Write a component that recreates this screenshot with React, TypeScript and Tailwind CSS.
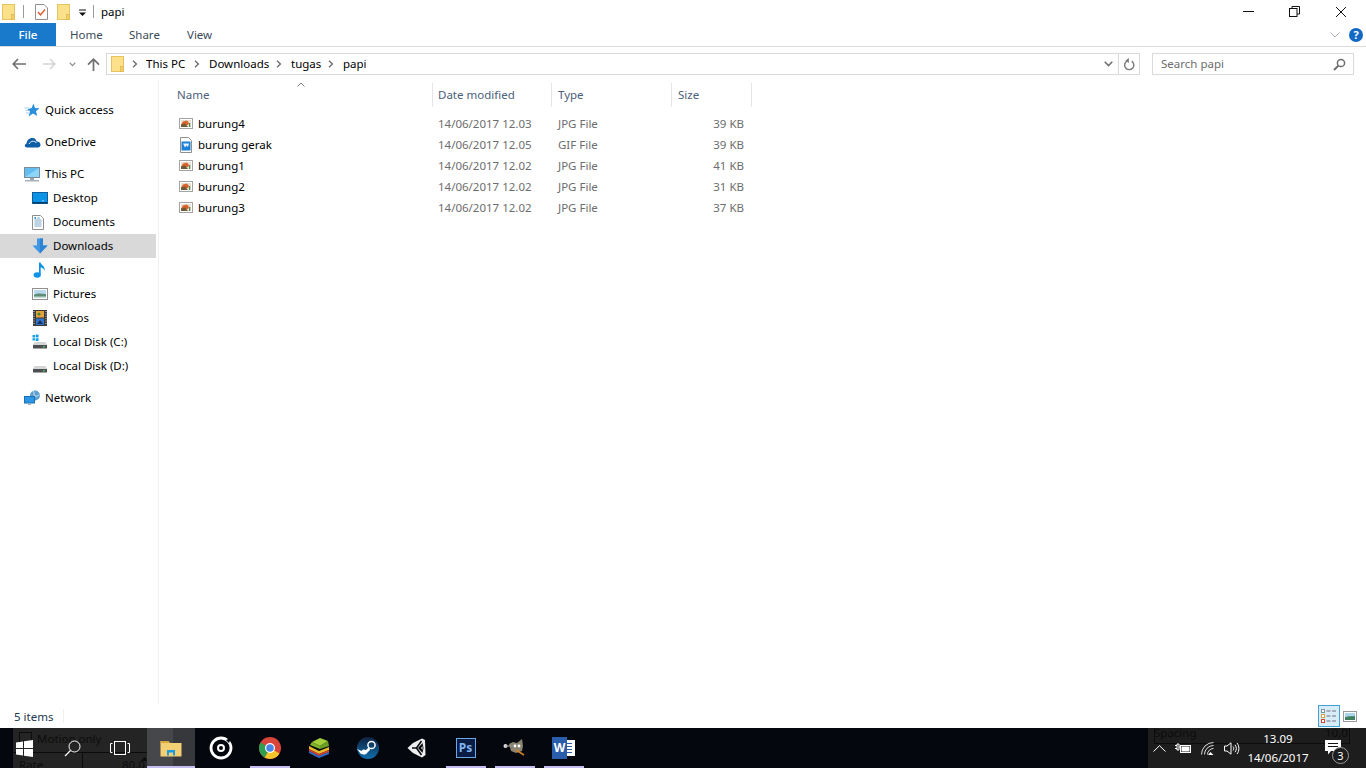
import type { ReactNode } from "react";

const FILES = [
  { name: "burung4", date: "14/06/2017 12.03", type: "JPG File", size: "39 KB", gif: false },
  { name: "burung gerak", date: "14/06/2017 12.05", type: "GIF File", size: "39 KB", gif: true },
  { name: "burung1", date: "14/06/2017 12.02", type: "JPG File", size: "41 KB", gif: false },
  { name: "burung2", date: "14/06/2017 12.02", type: "JPG File", size: "31 KB", gif: false },
  { name: "burung3", date: "14/06/2017 12.02", type: "JPG File", size: "37 KB", gif: false },
];

function Folder({ className = "" }: { className?: string }) {
  return (
    <svg width="13" height="16" viewBox="0 0 13 16" className={className}>
      <rect x="0.5" y="0.5" width="12" height="15" fill="#fde08a" stroke="#e6c35c" />
      <rect x="9.5" y="10.5" width="3" height="5" fill="#f3cf67" stroke="#dcb64e" strokeWidth="0.7" />
    </svg>
  );
}

function Chevron({ className = "" }: { className?: string }) {
  return (
    <svg width="6" height="8" viewBox="0 0 6 8" className={className}>
      <path d="M1 0.8 L4.4 4 L1 7.2" fill="none" stroke="#6f6f6f" strokeWidth="1.4" />
    </svg>
  );
}

function ImageFile() {
  return (
    <svg width="14" height="11" viewBox="0 0 14 11">
      <rect x="0.5" y="0.5" width="13" height="10" fill="#fff" stroke="#a3a3a3" />
      <rect x="2" y="2" width="10" height="7" fill="#e6ded2" />
      <path d="M2 7 L4 3.5 L8 2.5 L10 5 L9 7Z" fill="#d9622b" />
      <path d="M2 9 V6.5 L6 5.6 L9 9Z" fill="#6f5a38" />
      <rect x="10" y="5" width="1.2" height="4" fill="#4c8a4a" />
    </svg>
  );
}

function GifFile() {
  return (
    <svg width="12" height="16" viewBox="0 0 12 16">
      <path d="M0.5 0.5 H8.5 L11.5 3.5 V15.5 H0.5Z" fill="#fff" stroke="#8f8f8f" />
      <rect x="1.5" y="4.5" width="9" height="9" fill="#1a7fd6" />
      <path d="M3 6.5 H9 L8 10 L6.5 8.5 L5 10.5Z" fill="#e8f3ff" />
    </svg>
  );
}

function Star() {
  return (
    <svg width="16" height="15" viewBox="0 0 16 15">
      <path d="M9.5 0.5 L11 5 L15.5 5.3 L12 8.2 L13.2 13 L9 10.4 L4.6 13.4 L6 8.3 L3.5 6.2 L7.6 5Z" fill="#2b8fdc" />
      <path d="M0.5 5 H5 M1.5 7.5 H5 M2 10 H5" stroke="#9ccdf2" strokeWidth="1" />
    </svg>
  );
}

function Cloud() {
  return (
    <svg width="17" height="11" viewBox="0 0 17 11">
      <path d="M3 10.5 C0.5 10.5 0 7.5 2.5 6.5 C3 3 5.5 0.5 9 1 C11 1.2 12 2.5 12.5 4.5 C15 4.3 16.7 6 16.5 8 C16.4 9.5 15.5 10.5 14 10.5Z" fill="#0f5fa8" />
      <path d="M5 7 C7 3.5 10.5 3.5 12.5 6" fill="none" stroke="#fff" strokeWidth="0.9" />
    </svg>
  );
}

function Monitor() {
  return (
    <svg width="16" height="15" viewBox="0 0 16 15">
      <rect x="0.5" y="0.5" width="15" height="10" fill="#63bdf0" stroke="#7a8b99" />
      <path d="M1 10 L15 1 V10Z" fill="#8ed4f7" />
      <rect x="6" y="11" width="4" height="2" fill="#9aa7b2" />
      <rect x="1" y="13" width="14" height="1.5" fill="#a7b2bc" />
    </svg>
  );
}

function Desktop() {
  return (
    <svg width="16" height="12" viewBox="0 0 16 12">
      <rect x="0.5" y="0.5" width="15" height="11" fill="#0c93e6" stroke="#0b5f9c" />
      <rect x="1" y="10" width="14" height="1.5" fill="#063f6b" />
      <rect x="10" y="8.5" width="2" height="0.8" fill="#bfe6fb" />
    </svg>
  );
}

function Doc() {
  return (
    <svg width="12" height="15" viewBox="0 0 12 15">
      <path d="M0.5 0.5 H8.5 L11.5 3.5 V14.5 H0.5Z" fill="#fff" stroke="#8f8f8f" />
      <path d="M5 3 H8 M2.5 5 H9.5 M2.5 7 H9.5 M2.5 9 H9.5 M2.5 11 H9.5" stroke="#6a9fc4" strokeWidth="0.9" />
      <path d="M2.5 3 H4" stroke="#2e9be0" strokeWidth="2" />
    </svg>
  );
}

function Download() {
  return (
    <svg width="16" height="16" viewBox="0 0 16 16">
      <path d="M5 0.5 H11 V7.5 H15.5 L8 15.5 L0.5 7.5 H5Z" fill="#3f97e4" />
      <path d="M8 0.5 H11 V7.5 H15.5 L8 15.5Z" fill="#2b84d4" />
    </svg>
  );
}

function Note() {
  return (
    <svg width="14" height="16" viewBox="0 0 14 16" className="ml-[1px]">
      <ellipse cx="4.2" cy="13" rx="3.6" ry="2.8" fill="#0f94ea" />
      <path d="M6 13 V0.5 H7.5 C8 3 12.6 4.2 11.6 9 C11 6.8 9.3 5.8 7.7 5.5 V13Z" fill="#0f94ea" />
    </svg>
  );
}

function Picture() {
  return (
    <svg width="16" height="12" viewBox="0 0 16 12">
      <rect x="0.5" y="0.5" width="15" height="11" fill="#fff" stroke="#8f8f8f" />
      <rect x="2" y="2" width="12" height="8" fill="#b8d8ee" />
      <path d="M2 7 C5 4.5 9 5.5 14 6 V10 H2Z" fill="#5f8d78" />
      <path d="M2 8.5 H14 V10 H2Z" fill="#c5d8d8" />
    </svg>
  );
}

function Film() {
  return (
    <svg width="14" height="16" viewBox="0 0 14 16" className="ml-[1px]">
      <rect width="14" height="16" fill="#3a3a3a" />
      <path d="M1 1 V15 M13 1 V15" stroke="#ddd" strokeWidth="1" strokeDasharray="1 1.4" />
      <rect x="3" y="1" width="8" height="6.5" fill="#e6a13a" />
      <rect x="3" y="8.5" width="8" height="6.5" fill="#2f74c9" />
      <circle cx="6" cy="4" r="1.6" fill="#3c8a3c" />
      <path d="M4 14 L7 10 L10 14Z" fill="#14325f" />
    </svg>
  );
}

function Disk({ win = false }: { win?: boolean }) {
  return (
    <svg width="16" height="16" viewBox="0 0 16 16">
      {win && <path d="M0.5 1 H3 V3.5 H0.5Z M3.7 0.6 H6.5 V3.5 H3.7Z M0.5 4.2 H3 V6.6 H0.5Z M3.7 4.2 H6.5 V7 H3.7Z" fill="#12a0ee" />}
      <path d="M2.5 8 H13.5 L15 11 H1Z" fill="#d5d5d5" />
      <rect x="1" y="11" width="14" height="3.5" fill="#4a4f52" />
      <rect x="11" y="12.2" width="1.6" height="1.2" fill="#5fe05f" />
    </svg>
  );
}

function Net() {
  return (
    <svg width="17" height="16" viewBox="0 0 17 16">
      <circle cx="11" cy="5.5" r="5" fill="#5d9fcf" />
      <path d="M9 1 C11 3 9 5 11 6 C13 7 14 5 15.5 5" fill="none" stroke="#d4e6f2" strokeWidth="1" />
      <rect x="0.5" y="6.5" width="10" height="6.5" fill="#2a96e5" stroke="#1b6fb0" />
      <rect x="4" y="13.5" width="3" height="1.5" fill="#9ab1c1" />
    </svg>
  );
}

function NavRow({ icon, label, child, active }: { icon: ReactNode; label: string; child?: boolean; active?: boolean }) {
  return (
    <div className={`flex h-6 items-center text-black ${active ? "bg-[#d9d9d9]" : ""} ${child ? "pl-8" : "pl-6"}`}>
      <span className="flex w-[21px] shrink-0 items-center justify-start">{icon}</span>
      <span>{label}</span>
    </div>
  );
}

function TitleBar() {
  return (
    <div className="flex h-[23px] items-center bg-white">
      <Folder className="ml-[2px]" />
      <span className="ml-[8px] h-[13px] w-px bg-[#9a9a9a]" />
      <svg width="13" height="16" viewBox="0 0 13 16" className="ml-[11px]">
        <path d="M0.5 0.5 H9 L12.5 4 V15.5 H0.5Z" fill="#fff" stroke="#8f8f8f" />
        <path d="M3 8 L5.5 11 L10 5.5" fill="none" stroke="#e2572c" strokeWidth="1.4" />
      </svg>
      <Folder className="ml-[9px]" />
      <svg width="9" height="8" viewBox="0 0 9 8" className="ml-[8px] mt-[2px]">
        <rect x="1" y="0.5" width="7" height="1" fill="#111" />
        <path d="M1 3.5 H8 L4.5 7Z" fill="#111" />
      </svg>
      <span className="ml-[6px] h-[13px] w-px bg-[#9a9a9a]" />
      <span className="ml-[7px] text-black">papi</span>
      <div className="ml-auto flex items-center">
        <svg width="11" height="11" viewBox="0 0 11 11" className="mr-[35px]"><path d="M0 5.5 H11" stroke="#111" /></svg>
        <svg width="11" height="11" viewBox="0 0 11 11" className="mr-[35px]">
          <rect x="0.5" y="2.5" width="7.5" height="8" fill="#fff" stroke="#111" />
          <path d="M3 2.5 V0.5 H10.5 V8 H8" fill="none" stroke="#111" />
        </svg>
        <svg width="12" height="12" viewBox="0 0 12 12" className="mr-[19px]"><path d="M1 1 L11 11 M11 1 L1 11" stroke="#111" /></svg>
      </div>
    </div>
  );
}

function RibbonTabs() {
  return (
    <div className="flex h-6 items-center border-b border-[#dadbdc] bg-white text-[#3b4a5a]">
      <div className="flex h-[23px] w-14 items-center justify-center bg-[#1979ca] font-medium text-white">File</div>
      <span className="ml-[14px] w-[29px]">Home</span>
      <span className="ml-[30px] w-[29px]">Share</span>
      <span className="ml-[29px]">View</span>
      <div className="ml-auto flex items-center">
        <svg width="10" height="6" viewBox="0 0 10 6" className="mr-[9px]"><path d="M0.5 0.5 L5 5 L9.5 0.5" fill="none" stroke="#aab2ba" /></svg>
        <div className="mr-[3px] flex h-[14px] w-[14px] items-center justify-center rounded-full bg-[#1469c4] text-[11px] font-bold leading-none text-white">?</div>
      </div>
    </div>
  );
}

function AddressBar() {
  return (
    <div className="flex h-[33px] items-center bg-white pt-px">
      <svg width="14" height="12" viewBox="0 0 14 12" className="ml-3">
        <path d="M6 1 L1.2 6 L6 11 M1.5 6 H14" fill="none" stroke="#6e6e6e" strokeWidth="1.6" />
      </svg>
      <svg width="13" height="12" viewBox="0 0 13 12" className="ml-[17px]">
        <path d="M7 1 L11.8 6 L7 11 M11.5 6 H0" fill="none" stroke="#d4d4d4" strokeWidth="1.6" />
      </svg>
      <svg width="7" height="5" viewBox="0 0 7 5" className="ml-[13px]">
        <path d="M0.7 0.7 L3.5 3.6 L6.3 0.7" fill="none" stroke="#8a8a8a" strokeWidth="1.2" />
      </svg>
      <svg width="13" height="13" viewBox="0 0 13 13" className="ml-[11px]">
        <path d="M1 6.6 L6.5 1.2 L12 6.6 M6.5 1.5 V13" fill="none" stroke="#6e6e6e" strokeWidth="1.7" />
      </svg>
      <div className="ml-[6px] flex h-[22px] w-[1034px] items-center border border-[#d9d9d9]">
        <Folder className="ml-[4px]" />
        <Chevron className="ml-[8px]" />
        <span className="ml-[8px] w-[48px] text-black">This PC</span>
        <Chevron />
        <span className="ml-[9px] w-[67px] text-black">Downloads</span>
        <Chevron />
        <span className="ml-[9px] w-[37px] text-black">tugas</span>
        <Chevron />
        <span className="ml-[9px] text-black">papi</span>
        <div className="ml-auto flex h-full items-center">
          <svg width="9" height="6" viewBox="0 0 9 6" className="mr-[5px]">
            <path d="M0.7 0.7 L4.5 4.6 L8.3 0.7" fill="none" stroke="#6f6f6f" strokeWidth="1.5" />
          </svg>
          <span className="h-full w-px bg-[#d9d9d9]" />
          <svg width="12" height="13" viewBox="0 0 12 13" className="mx-[4px]">
            <path d="M4.5 2.8 A4.6 4.6 0 1 0 8.7 3.2" fill="none" stroke="#7a7a7a" strokeWidth="1.4" />
            <path d="M4.4 0 V5 L1 2.6Z" fill="#7a7a7a" transform="translate(1.5 0)" />
          </svg>
        </div>
      </div>
      <div className="ml-3 flex h-[22px] w-[202px] items-center justify-between border border-[#d9d9d9] pl-2 pr-[7px] text-[#6d6d6d]">
        <span>Search papi</span>
        <svg width="13" height="13" viewBox="0 0 13 13">
          <circle cx="8" cy="5" r="3.6" fill="none" stroke="#6e6e6e" strokeWidth="1.5" />
          <path d="M5.4 7.6 L1 12" stroke="#6e6e6e" strokeWidth="2" />
        </svg>
      </div>
    </div>
  );
}

function NavPane() {
  return (
    <div className="flex w-[159px] shrink-0 flex-col border-r border-[#f0f0f0] pr-[2px] pt-[18px]">
      <NavRow icon={<Star />} label="Quick access" />
      <div className="h-2" />
      <NavRow icon={<Cloud />} label="OneDrive" />
      <div className="h-2" />
      <NavRow icon={<Monitor />} label="This PC" />
      <NavRow child icon={<Desktop />} label="Desktop" />
      <NavRow child icon={<Doc />} label="Documents" />
      <NavRow child active icon={<Download />} label="Downloads" />
      <NavRow child icon={<Note />} label="Music" />
      <NavRow child icon={<Picture />} label="Pictures" />
      <NavRow child icon={<Film />} label="Videos" />
      <NavRow child icon={<Disk win />} label="Local Disk (C:)" />
      <NavRow child icon={<Disk />} label="Local Disk (D:)" />
      <div className="h-2" />
      <NavRow icon={<Net />} label="Network" />
    </div>
  );
}

function FileList() {
  return (
    <div className="relative flex-1 pl-3 pt-[3px]">
      <svg width="8" height="5" viewBox="0 0 8 5" className="absolute left-[138px] top-[2px]">
        <path d="M0.5 4.5 L4 1 L7.5 4.5" fill="none" stroke="#7a7a7a" />
      </svg>
      <div className="grid h-6 grid-cols-[261px_119px_120px_81px] text-[#4c607a]">
        <div className="flex items-center pl-[6px]">Name</div>
        <div className="flex items-center border-l border-[#e5e5e5] pl-[5px]">Date modified</div>
        <div className="flex items-center border-l border-[#e5e5e5] pl-[6px]">Type</div>
        <div className="flex items-center border-x border-[#e5e5e5] pl-[6px]">Size</div>
      </div>
      <div className="mt-[6px]">
        {FILES.map((f) => (
          <div key={f.name} className="grid h-[21px] grid-cols-[261px_119px_120px_80px] items-center">
            <div className="flex items-center pl-[8px] text-black">
              <span className="flex w-[19px] items-center justify-start">{f.gif ? <span className="ml-[1px] flex"><GifFile /></span> : <ImageFile />}</span>
              <span>{f.name}</span>
            </div>
            <div className="pl-[6px] text-[#6d6d6d]">{f.date}</div>
            <div className="pl-[7px] text-[#6d6d6d]">{f.type}</div>
            <div className="pr-[7px] text-right text-[#6d6d6d]">{f.size}</div>
          </div>
        ))}
      </div>
    </div>
  );
}

function StatusBar() {
  return (
    <div className="flex h-[24px] items-center bg-white pl-[14px] text-[#22384f]">
      <span className="mt-[2px]">5 items</span>
      <span className="ml-[10px] h-[14px] w-px bg-[#f0f0f0]" />
      <div className="ml-auto flex items-center pr-[9px]">
        <div className="flex h-[22px] w-[22px] items-center justify-center border border-[#3fa2d8] bg-[#d8ecf8]">
          <svg width="16" height="14" viewBox="0 0 16 14">
            <rect x="0.5" y="0.5" width="3" height="3" fill="#fff" stroke="#7d8fa0" />
            <rect x="0.5" y="5.5" width="3" height="3" fill="#fff" stroke="#d7a23a" />
            <rect x="0.5" y="10.5" width="3" height="3" fill="#fff" stroke="#d2452c" />
            <path d="M5.5 2 H9.5 M11 2 H15 M5.5 7 H9.5 M11 7 H15 M5.5 12 H9.5 M11 12 H15" stroke="#6d7480" />
          </svg>
        </div>
        <svg width="14" height="11" viewBox="0 0 14 11" className="ml-[3px]">
          <rect x="0.5" y="0.5" width="13" height="10" fill="#fff" stroke="#9a9a9a" />
          <rect x="2" y="2" width="10" height="7" fill="#a9d5ec" />
          <path d="M2 6.5 C5 4.5 8 5.5 12 5 V9 H2Z" fill="#3f7f5f" />
        </svg>
      </div>
    </div>
  );
}

function TaskSlot({ children, running }: { children: ReactNode; running?: boolean }) {
  return (
    <div className="relative flex h-10 w-[49px] shrink-0 items-center justify-center">
      {children}
      {running && <span className="absolute bottom-0 left-1/2 h-[2px] w-10 -translate-x-1/2 bg-[#c5bdf0]" />}
    </div>
  );
}

function Taskbar() {
  return (
    <div className="relative flex h-10 items-center overflow-hidden bg-[#04070e] text-white">
      {/* what shows through the glass */}
      <div className="absolute left-[13px] top-0 h-10 w-[134px] bg-[#242424] text-[#0c0c0c]">
        <span className="absolute left-[6px] top-[4px] h-[13px] w-[13px] border border-[#0c0c0c]" />
        <span className="absolute left-[24px] top-[5px]">Motion only</span>
        <span className="absolute left-0 top-[24px] h-px w-full bg-[#0c0c0c]" />
        <span className="absolute left-[69px] top-[24px] h-4 w-px bg-[#0c0c0c]" />
        <span className="absolute left-[6px] top-[31px]">Rate</span>
        <span className="absolute left-[109px] top-[31px]">80,0</span>
        <svg width="7" height="4" viewBox="0 0 7 4" className="absolute left-[128px] top-[29px]"><path d="M0 4 L3.5 0 L7 4Z" fill="#0c0c0c" /></svg>
      </div>
      <div className="absolute left-[1148px] top-0 h-10 w-[218px] bg-[#1d1d1d] text-[#0c0c0c]">
        <span className="absolute left-[6px] top-[-3px] h-[19px] w-[196px] border-x border-b border-[#0c0c0c]" />
        <span className="absolute left-[6px] top-[-1px]">Spacing</span>
        <span className="absolute left-[177px] top-[-1px]">10,0</span>
      </div>

      <div className="relative flex items-center">
        <div className="flex h-10 w-[48px] items-center justify-center">
          <svg width="17" height="17" viewBox="0 0 17 17" fill="#fff">
            <path d="M0 2.6 L7 1.5 V8 H0Z M8 1.3 L17 0 V8 H8Z M0 9 H7 V15.5 L0 14.4Z M8 9 H17 V17 L8 15.7Z" />
          </svg>
        </div>
        <div className="flex h-10 w-[48px] items-center justify-center">
          <svg width="17" height="17" viewBox="0 0 17 17" fill="none" stroke="#fff">
            <circle cx="10.5" cy="6.5" r="5.5" />
            <path d="M6.5 10.5 L1 16" strokeWidth="1.3" />
          </svg>
        </div>
        <div className="mr-[3px] flex h-10 w-[48px] items-center justify-center">
          <svg width="20" height="14" viewBox="0 0 20 14" fill="none" stroke="#fff">
            <rect x="4.5" y="0.5" width="11" height="13" />
            <path d="M2.5 2.5 H0.5 V11.5 H2.5 M17.5 2.5 H19.5 V11.5 H17.5" />
          </svg>
        </div>
        <div className="relative flex h-10 w-[48px] shrink-0 items-center justify-center bg-[#37383b]">
          <span className="absolute inset-y-0 left-0 w-[26px] bg-[#46474a]" />
          <svg width="22" height="18" viewBox="0 0 22 18" className="relative">
            <path d="M0.5 2 H8 L10 4 H21.5 V17.5 H0.5Z" fill="#f5cf73" />
            <path d="M0.5 2 H8 L10 4 H0.5Z" fill="#d9a93e" />
            <path d="M7 16.5 V11 H15 V16.5 H13 V13.5 H9 V16.5Z" fill="#1a9be0" />
          </svg>
          <span className="absolute inset-x-0 bottom-0 h-[2px] bg-[#c5bdf0]" />
        </div>
        <div className="w-px" />
        <TaskSlot>
          <svg width="24" height="24" viewBox="0 0 24 24">
            <circle cx="12" cy="12" r="10" fill="none" stroke="#fff" strokeWidth="2.8" />
            <circle cx="12" cy="12" r="3" fill="none" stroke="#fff" strokeWidth="2" />
            <path d="M17 4 L22 2 L20 7Z" fill="#04070e" />
          </svg>
        </TaskSlot>
        <TaskSlot running>
          <svg width="22" height="22" viewBox="0 0 22 22">
            <circle cx="11" cy="11" r="11" fill="#d9453a" />
            <path d="M11 11 L20.5 16.5 A11 11 0 0 1 5.5 20.5Z" fill="#f5c52c" />
            <path d="M11 11 L5.5 20.5 A11 11 0 0 1 1.5 5.5Z" fill="#2f9e4f" />
            <circle cx="11" cy="11" r="5" fill="#fff" />
            <circle cx="11" cy="11" r="3.8" fill="#4a86e8" />
          </svg>
        </TaskSlot>
        <TaskSlot>
          <svg width="22" height="22" viewBox="0 0 22 22">
            <path d="M4 5 L12 1 L20 4 L12 9Z" fill="#a5cf3a" />
            <path d="M4 5 L12 9 L12 12 L2 8Z" fill="#7fb52b" />
            <path d="M12 9 L20 4 L21 9 L12 12Z" fill="#6aa026" />
            <path d="M1 9 L11 14 L21 10 V13 L11 17 L1 12Z" fill="#e9b92d" />
            <path d="M1 12 L11 17 L21 13 V15 L11 19 L1 14Z" fill="#d8402f" />
            <path d="M1 14 L11 19 L21 15 V17 L11 21 L1 16Z" fill="#2f6fd0" />
          </svg>
        </TaskSlot>
        <TaskSlot>
          <svg width="22" height="22" viewBox="0 0 22 22">
            <defs>
              <linearGradient id="steam" x1="0" y1="0" x2="0" y2="1">
                <stop offset="0" stopColor="#10213f" />
                <stop offset="1" stopColor="#0f6fae" />
              </linearGradient>
            </defs>
            <circle cx="11" cy="11" r="11" fill="url(#steam)" />
            <circle cx="14.5" cy="8" r="3.6" fill="none" stroke="#fff" strokeWidth="1.5" />
            <path d="M0 12 L7 15 L12 10 L13 13 L9 17 L4 17Z" fill="#fff" />
            <circle cx="7" cy="15" r="2.6" fill="#fff" />
          </svg>
        </TaskSlot>
        <TaskSlot>
          <svg width="19" height="20" viewBox="0 0 19 20">
            <path d="M0.5 10 L6 5 L15 0.5 L18 2 L18.5 17 L15 19.5 L6 15Z" fill="#efefef" />
            <path d="M5 10 H9.5 L14.5 3 M9.5 10 L14.5 17" fill="none" stroke="#0a0c12" strokeWidth="1.6" />
            <path d="M11 10 L15.5 5 L16.5 10 L15.5 15Z" fill="#0a0c12" />
            <path d="M14 10 L15.5 8 V12Z" fill="#efefef" />
          </svg>
        </TaskSlot>
        <TaskSlot running>
          <div className="flex h-[20px] w-[20px] items-center justify-center border border-[#6aa8ea] bg-[#0b1c44] text-[12px] font-bold leading-none text-[#7fb6f2]">Ps</div>
        </TaskSlot>
        <TaskSlot running>
          <svg width="24" height="18" viewBox="0 0 24 18">
            <path d="M6 5 L10 3 L14 4 L19 0 L20 7 L19 12 L13 14 L8 12Z" fill="#8a8472" />
            <circle cx="2.5" cy="7" r="2" fill="#e0e0e0" />
            <path d="M2 7 H8" stroke="#aaa" />
            <circle cx="12" cy="7" r="1.4" fill="#fff" />
            <circle cx="16" cy="7" r="1.4" fill="#fff" />
            <path d="M13 11 L21 16" stroke="#d0822a" strokeWidth="1.6" />
          </svg>
        </TaskSlot>
        <TaskSlot running>
          <div className="relative h-[22px] w-[23px]">
            <div className="absolute right-0 top-[3px] flex h-4 w-[14px] flex-col justify-center gap-[2px] bg-white px-[3px]">
              <span className="h-px bg-[#2a5ba8]" />
              <span className="h-px bg-[#2a5ba8]" />
              <span className="h-px bg-[#2a5ba8]" />
              <span className="h-px bg-[#2a5ba8]" />
            </div>
            <div className="absolute left-0 top-0 flex h-[22px] w-[15px] items-center justify-center bg-[#2b5eaa] text-[12px] font-bold leading-none text-white">W</div>
          </div>
        </TaskSlot>
      </div>

      <div className="relative ml-auto flex items-center">
        <svg width="13" height="7" viewBox="0 0 13 7" className="mr-[9px]"><path d="M0.5 6.5 L6.5 0.7 L12.5 6.5" fill="none" stroke="#fff" /></svg>
        <svg width="16" height="11" viewBox="0 0 16 11" className="mr-[10px]" fill="none" stroke="#fff">
          <path d="M0 2.5 H2 M0 5.5 H2 M2 1 H4 V7 H2Z M4 4 H5" />
          <rect x="5.5" y="2.5" width="10" height="7" />
          <rect x="7" y="4" width="7" height="4" fill="#fff" />
        </svg>
        <svg width="15" height="13" viewBox="0 0 15 13" className="mr-[8px]" fill="none" stroke="#fff">
          <path d="M0.5 12.5 A12 12 0 0 1 12.5 0.5 M3.5 12.5 A9 9 0 0 1 12.5 3.5 M6.5 12.5 A6 6 0 0 1 12.5 6.5" opacity="0.85" />
          <path d="M9.5 10 L12.5 13 H7Z" fill="#fff" stroke="none" />
        </svg>
        <svg width="16" height="13" viewBox="0 0 16 13" className="mr-[7px]" fill="none" stroke="#fff">
          <path d="M0.5 4 H3 L7 0.8 V12.2 L3 9 H0.5Z" />
          <path d="M9 4.5 C10 5.5 10 7.5 9 8.5 M11 2.8 C12.8 5 12.8 8 11 10.2 M13 1 C15.5 4 15.5 9 13 12" />
        </svg>
        <div className="mr-[15px] flex w-[62px] flex-col items-center leading-[19px]">
          <span>13.09</span>
          <span>14/06/2017</span>
        </div>
        <div className="relative h-10 w-[42px]">
          <svg width="16" height="15" viewBox="0 0 16 15" className="absolute left-[1px] top-[12px]">
            <path d="M0 0 H16 V11 H6 L3 14.5 V11 H0Z" fill="#fff" />
            <path d="M3 3.5 H13 M3 6.5 H13" stroke="#111" />
          </svg>
          <span className="absolute left-[8px] top-[19px] flex h-[17px] w-[17px] items-center justify-center rounded-full border border-[#9a9a9a] bg-[#1d1d1d] text-[11px] leading-none">3</span>
        </div>
      </div>
    </div>
  );
}

export default function App() {
  return (
    <div className="flex h-[768px] w-[1366px] flex-col overflow-hidden bg-white text-[11.5px] leading-none [font-family:'Noto_Sans','Liberation_Sans',sans-serif]">
      <TitleBar />
      <RibbonTabs />
      <AddressBar />
      <div className="flex min-h-0 flex-1">
        <NavPane />
        <FileList />
      </div>
      <StatusBar />
      <Taskbar />
    </div>
  );
}
